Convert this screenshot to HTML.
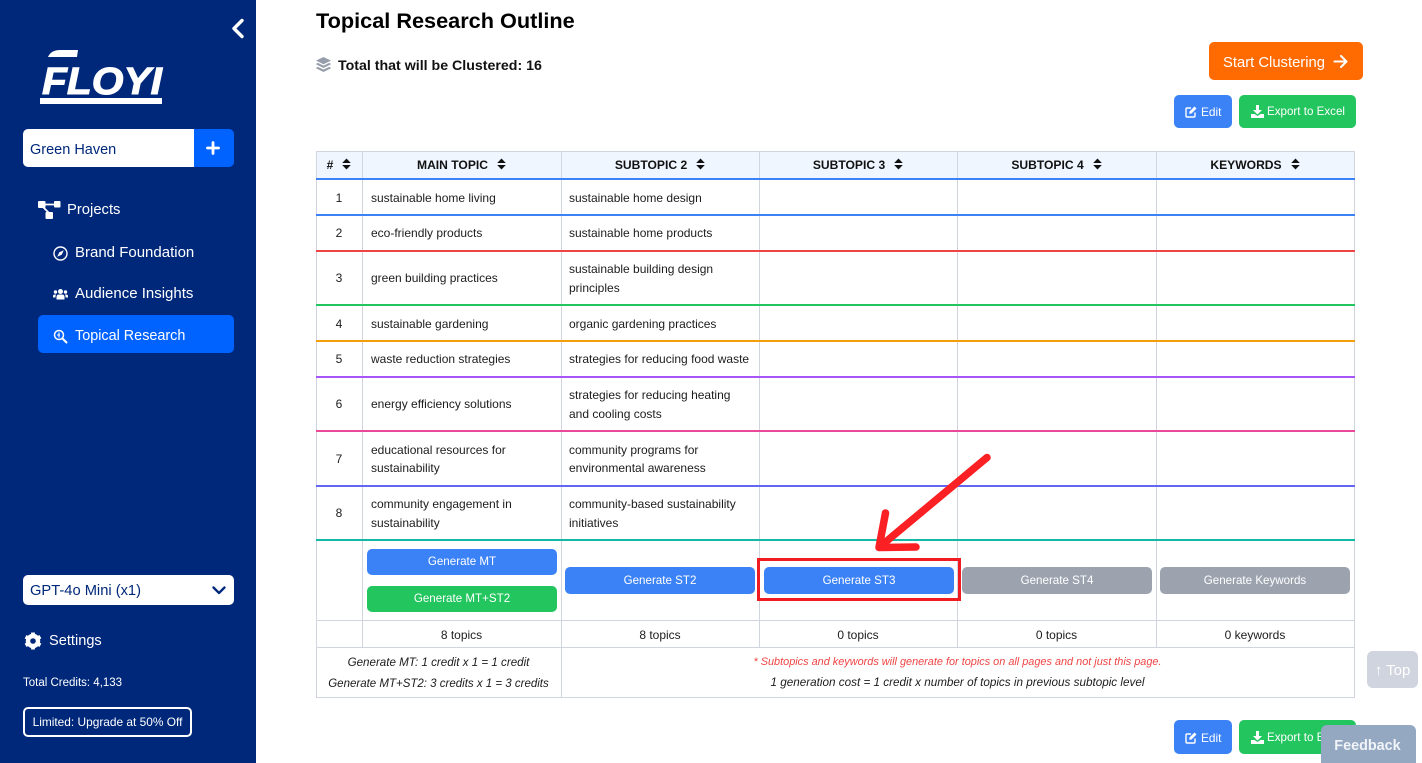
<!DOCTYPE html>
<html><head><meta charset="utf-8">
<style>
html,body{margin:0;padding:0;width:1422px;height:763px;overflow:hidden;background:#fff;font-family:"Liberation Sans",sans-serif;color:#111}
.a,.t,.c,.b,.l,.v{position:absolute}
.t{white-space:nowrap}
.c{white-space:nowrap;text-align:center}
.td{font-size:12px;color:#1c1c1c;white-space:nowrap;position:absolute}
.n{font-size:12px;color:#1c1c1c;position:absolute;left:316px;width:46px;text-align:center}
.h{position:absolute;top:152px;height:27px;line-height:27px;font-size:12.1px;font-weight:bold;color:#111;text-align:center;white-space:nowrap}
.l{left:316px;width:1039px;height:2px}
.g{left:316px;width:1039px;height:1px;background:#d1d5e0;position:absolute}
.v{width:1px;background:#d1d5e0}
.b{border-radius:5px;color:#fff;text-align:center;font-size:11.6px;white-space:nowrap;line-height:26px;height:26px}
.side{font-size:14.8px;color:#fff}
.sort{display:inline-block;margin-left:9px;vertical-align:-1px}
</style></head><body>
<!-- sidebar -->
<div class="a" style="left:0;top:0;width:256px;height:763px;background:#00287a"></div>
<svg class="a" style="left:230px;top:18px" width="15" height="21" viewBox="0 0 15 21"><path d="M12 2.500 4 10.500 12 18.500" fill="none" stroke="#fff" stroke-width="3.400" stroke-linecap="round" stroke-linejoin="round"/></svg>
<svg class="a" style="left:36px;top:44px" width="132" height="64" viewBox="0 0 132 64">
<path d="M12 13 Q15 6 24 6 L42 6 L41 13 Z" fill="#fff"/>
<text x="6" y="50" font-family="Liberation Sans" font-weight="bold" font-style="italic" font-size="38" fill="#fff" stroke="#fff" stroke-width="1" textLength="120" lengthAdjust="spacingAndGlyphs">FLOYI</text>
<rect x="4" y="54" width="122" height="6" fill="#fff"/></svg>
<div class="a" style="left:23px;top:129px;width:171px;height:38px;background:#fff;border-radius:5px 0 0 5px"></div>
<div class="t" style="left:30px;top:142px;font-size:14.500px;color:#00287a">Green Haven</div>
<div class="a" style="left:194px;top:129px;width:40px;height:38px;background:#0062ff;border-radius:0 5px 5px 0"></div>
<svg class="a" style="left:206px;top:141px" width="14" height="14"><path d="M7 1.500v11M1.500 7h11" stroke="#fff" stroke-width="2.800" stroke-linecap="round"/></svg>

<svg class="a" style="left:38px;top:200px" width="23" height="20" viewBox="0 0 23 20"><path d="M7 4.500h9M5 7l6 6" stroke="#fff" stroke-width="1.800" fill="none"/><rect x="0" y="1" width="7.500" height="7" rx="1" fill="#fff"/><rect x="16" y="1" width="6.500" height="6.500" rx="1" fill="#fff"/><rect x="7.500" y="12" width="7.500" height="7" rx="1" fill="#fff"/></svg>
<div class="t side" style="left:67px;top:202px">Projects</div>
<svg class="a" style="left:53px;top:246px" width="15" height="15" viewBox="0 0 15 15"><circle cx="7.500" cy="7.500" r="6.500" fill="none" stroke="#fff" stroke-width="1.400"/><path d="M10.800 4.200 8.700 8.700 4.200 10.800 6.300 6.300Z" fill="#fff"/></svg>
<div class="t side" style="left:75px;top:244px;font-size:15px">Brand Foundation</div>
<svg class="a" style="left:53px;top:288px" width="15" height="12" viewBox="0 0 15 12"><circle cx="7.500" cy="3.500" r="2.500" fill="#fff"/><circle cx="2.500" cy="4" r="1.700" fill="#fff"/><circle cx="12.500" cy="4" r="1.700" fill="#fff"/><path d="M3.500 11.500V9Q3.500 6.500 6 6.500H9Q11.500 6.500 11.500 9V11.500Z" fill="#fff"/><path d="M0 9.500V8Q0 6.500 2 6.500H3Q2.500 7.500 2.500 9.500ZM15 9.500V8Q15 6.500 13 6.500H12Q12.500 7.500 12.500 9.500Z" fill="#fff"/></svg>
<div class="t side" style="left:75px;top:285px;font-size:15px">Audience Insights</div>
<div class="a" style="left:38px;top:315px;width:196px;height:38px;background:#0062ff;border-radius:5px"></div>
<svg class="a" style="left:53px;top:329px" width="15" height="15" viewBox="0 0 15 15"><circle cx="6" cy="6" r="4.500" fill="none" stroke="#fff" stroke-width="1.500"/><path d="M9.500 9.500 13.500 13.500" stroke="#fff" stroke-width="2" stroke-linecap="round"/><path d="M6 3.500V8.500M4 6h3" stroke="#fff" stroke-width="1.100"/></svg>
<div class="t side" style="left:75px;top:328px;font-size:14.400px">Topical Research</div>

<div class="a" style="left:23px;top:575px;width:211px;height:30px;background:#fff;border-radius:5px"></div>
<div class="t" style="left:30px;top:583px;font-size:14.700px;color:#00287a">GPT-4o Mini (x1)</div>
<svg class="a" style="left:212px;top:586px" width="14" height="9"><path d="M1.500 1.500 7 7 12.500 1.500" fill="none" stroke="#00287a" stroke-width="2.300" stroke-linecap="round" stroke-linejoin="round"/></svg>
<svg class="a" style="left:24px;top:632px" width="18" height="18" viewBox="0 0 18 18"><circle cx="9" cy="9" r="5" fill="none" stroke="#fff" stroke-width="4.400"/><path d="M9 0.500V4M9 14V17.500M1.600 4.700 4.700 6.500M13.300 11.500 16.400 13.300M1.600 13.300 4.700 11.500M13.300 6.500 16.400 4.700" stroke="#fff" stroke-width="3.800"/></svg>
<div class="t side" style="left:49px;top:633px;font-size:14.600px">Settings</div>
<div class="t" style="left:23px;top:677px;font-size:11.500px;color:#fff">Total Credits: 4,133</div>
<div class="a" style="left:23px;top:707px;width:165px;border:2px solid #fff;border-radius:5px;box-sizing:content-box;height:26px"></div>
<div class="c" style="left:23px;top:715px;width:169px;font-size:11.900px;color:#fff">Limited: Upgrade at 50% Off</div>

<!-- header -->
<div class="t" style="left:316px;top:8px;font-size:21.700px;font-weight:bold;color:#000">Topical Research Outline</div>
<svg class="a" style="left:316px;top:57px" width="15" height="16" viewBox="0 0 15 16"><path d="M7.500 0 15 3.600 7.500 7.200 0 3.600Z" fill="#979eab"/><path d="M1.500 5.800 7.500 8.600 13.500 5.800 15 7.300 7.500 11 0 7.300Z" fill="#979eab"/><path d="M1.500 9.700 7.500 12.500 13.500 9.700 15 11.200 7.500 15 0 11.200Z" fill="#979eab"/></svg>
<div class="t" style="left:338px;top:58px;font-size:14.200px;font-weight:bold;color:#111">Total that will be Clustered: 16</div>

<div class="a" style="left:1209px;top:42px;width:154px;height:38px;background:#ff6b00;border-radius:5px"></div>
<div class="t" style="left:1223px;top:55px;font-size:14.800px;color:#fff">Start Clustering</div>
<svg class="a" style="left:1333px;top:54px" width="15" height="15" viewBox="0 0 15 15"><path d="M1.500 7.500H13M8 2 13.500 7.500 8 13" fill="none" stroke="#fff" stroke-width="2.100" stroke-linecap="round" stroke-linejoin="round"/></svg>

<div class="a" style="left:1174px;top:95px;width:58px;height:33px;background:#3b82f6;border-radius:5px"></div>
<svg class="a" style="left:1185px;top:105px" width="13" height="13" viewBox="0 0 13 13"><path d="M10 7.500V11Q10 12 9 12H2Q1 12 1 11V4Q1 3 2 3H6" fill="none" stroke="#fff" stroke-width="1.400"/><path d="M4.500 6.500 9.500 1.500 11.500 3.500 6.500 8.500 4.200 8.800Z" fill="#fff"/></svg>
<div class="t" style="left:1201px;top:105px;font-size:11.900px;color:#fff">Edit</div>
<div class="a" style="left:1239px;top:95px;width:117px;height:33px;background:#22c55e;border-radius:5px"></div>
<svg class="a" style="left:1251px;top:105px" width="13" height="13" viewBox="0 0 13 13"><path d="M5 0h3v5h3L6.500 9.500 2 5h3Z" fill="#fff"/><path d="M0 9h3.500l3 2 3-2H13v4H0Z" fill="#fff"/></svg>
<div class="t" style="left:1267px;top:105px;font-size:11.600px;color:#fff">Export to Excel</div>

<!-- table -->
<div class="a" style="left:316px;top:151px;width:1039px;height:28px;background:#eff6ff"></div>
<div class="g" style="top:151px"></div>
<div class="v" style="left:316px;top:151px;height:547px"></div>
<div class="v" style="left:362px;top:151px;height:497px"></div>
<div class="v" style="left:561px;top:151px;height:547px"></div>
<div class="v" style="left:759px;top:151px;height:497px"></div>
<div class="v" style="left:957px;top:151px;height:497px"></div>
<div class="v" style="left:1156px;top:151px;height:497px"></div>
<div class="v" style="left:1354px;top:151px;height:547px"></div>

<div class="h" style="left:316px;width:46px">#<svg class="sort" width="9" height="12" viewBox="0 0 9 12"><path d="M4.500 0.500 8.800 5H0.200ZM4.500 11.500 0.200 7H8.800Z" fill="#111"/></svg></div>
<div class="h" style="left:362px;width:199px">MAIN TOPIC<svg class="sort" width="9" height="12" viewBox="0 0 9 12"><path d="M4.500 0.500 8.800 5H0.200ZM4.500 11.500 0.200 7H8.800Z" fill="#111"/></svg></div>
<div class="h" style="left:561px;width:198px">SUBTOPIC 2<svg class="sort" width="9" height="12" viewBox="0 0 9 12"><path d="M4.500 0.500 8.800 5H0.200ZM4.500 11.500 0.200 7H8.800Z" fill="#111"/></svg></div>
<div class="h" style="left:759px;width:198px">SUBTOPIC 3<svg class="sort" width="9" height="12" viewBox="0 0 9 12"><path d="M4.500 0.500 8.800 5H0.200ZM4.500 11.500 0.200 7H8.800Z" fill="#111"/></svg></div>
<div class="h" style="left:957px;width:199px">SUBTOPIC 4<svg class="sort" width="9" height="12" viewBox="0 0 9 12"><path d="M4.500 0.500 8.800 5H0.200ZM4.500 11.500 0.200 7H8.800Z" fill="#111"/></svg></div>
<div class="h" style="left:1156px;width:198px">KEYWORDS<svg class="sort" width="9" height="12" viewBox="0 0 9 12"><path d="M4.500 0.500 8.800 5H0.200ZM4.500 11.500 0.200 7H8.800Z" fill="#111"/></svg></div>

<div class="l" style="top:178px;background:#3b82f6"></div>
<div class="l" style="top:214px;background:#3b82f6"></div>
<div class="l" style="top:250px;background:#ef4444"></div>
<div class="l" style="top:304px;background:#22c55e"></div>
<div class="l" style="top:340px;background:#f59e0b"></div>
<div class="l" style="top:376px;background:#a855f7"></div>
<div class="l" style="top:430px;background:#ec4899"></div>
<div class="l" style="top:485px;background:#6366f1"></div>
<div class="l" style="top:539px;background:#14b8a6"></div>
<div class="g" style="top:620px"></div>
<div class="g" style="top:647px"></div>
<div class="g" style="top:697px"></div>

<div class="n" style="top:191px">1</div><div class="td" style="left:371px;top:191px">sustainable home living</div><div class="td" style="left:569px;top:191px">sustainable home design</div>
<div class="n" style="top:226px">2</div><div class="td" style="left:371px;top:226px">eco-friendly products</div><div class="td" style="left:569px;top:226px">sustainable home products</div>
<div class="n" style="top:271px">3</div><div class="td" style="left:371px;top:271px">green building practices</div><div class="td" style="left:569px;top:262px">sustainable building design</div><div class="td" style="left:569px;top:281px">principles</div>
<div class="n" style="top:317px">4</div><div class="td" style="left:371px;top:317px">sustainable gardening</div><div class="td" style="left:569px;top:317px">organic gardening practices</div>
<div class="n" style="top:352px">5</div><div class="td" style="left:371px;top:352px">waste reduction strategies</div><div class="td" style="left:569px;top:352px">strategies for reducing food waste</div>
<div class="n" style="top:397px">6</div><div class="td" style="left:371px;top:397px">energy efficiency solutions</div><div class="td" style="left:569px;top:388px">strategies for reducing heating</div><div class="td" style="left:569px;top:407px">and cooling costs</div>
<div class="n" style="top:452px">7</div><div class="td" style="left:371px;top:443px">educational resources for</div><div class="td" style="left:371px;top:461px">sustainability</div><div class="td" style="left:569px;top:443px">community programs for</div><div class="td" style="left:569px;top:461px">environmental awareness</div>
<div class="n" style="top:506px">8</div><div class="td" style="left:371px;top:497px">community engagement in</div><div class="td" style="left:371px;top:516px">sustainability</div><div class="td" style="left:569px;top:497px">community-based sustainability</div><div class="td" style="left:569px;top:516px">initiatives</div>

<div class="b" style="left:367px;top:549px;width:190px;background:#3b82f6">Generate MT</div>
<div class="b" style="left:367px;top:586px;width:190px;background:#22c55e">Generate MT+ST2</div>
<div class="b" style="left:565px;top:567px;width:190px;height:27px;line-height:28px;background:#3b82f6">Generate ST2</div>
<div class="b" style="left:764px;top:567px;width:190px;height:27px;line-height:28px;background:#3b82f6">Generate ST3</div>
<div class="b" style="left:962px;top:567px;width:190px;height:27px;line-height:28px;background:#9ca3af">Generate ST4</div>
<div class="b" style="left:1160px;top:567px;width:190px;height:27px;line-height:28px;background:#9ca3af">Generate Keywords</div>

<div class="c td" style="left:362px;width:199px;top:628px">8 topics</div>
<div class="c td" style="left:561px;width:198px;top:628px">8 topics</div>
<div class="c td" style="left:759px;width:198px;top:628px">0 topics</div>
<div class="c td" style="left:957px;width:199px;top:628px">0 topics</div>
<div class="c td" style="left:1156px;width:198px;top:628px">0 keywords</div>

<div class="c" style="left:316px;width:245px;top:656px;font-size:11.600px;font-style:italic;color:#1c1c1c">Generate MT: 1 credit x 1 = 1 credit</div>
<div class="c" style="left:316px;width:245px;top:678px;font-size:11.500px;font-style:italic;color:#1c1c1c">Generate MT+ST2: 3 credits x 1 = 3 credits</div>
<div class="c" style="left:561px;width:793px;top:656px;font-size:10.900px;font-style:italic;color:#ef4444">* Subtopics and keywords will generate for topics on all pages and not just this page.</div>
<div class="c" style="left:561px;width:793px;top:676px;font-size:11.700px;font-style:italic;color:#1c1c1c">1 generation cost = 1 credit x number of topics in previous subtopic level</div>

<!-- annotation -->
<div class="a" style="left:757px;top:558px;width:204px;height:43px;border:3px solid #f01c22;box-sizing:border-box"></div>
<svg class="a" style="left:870px;top:450px" width="125" height="105" viewBox="0 0 125 105"><path d="M117 7.500 9 97.500M15.500 63 9 97.500 46 97" fill="none" stroke="#fb2024" stroke-width="7.500" stroke-linecap="round" stroke-linejoin="round"/></svg>

<!-- bottom -->
<div class="a" style="left:1174px;top:720px;width:58px;height:34px;background:#3b82f6;border-radius:5px"></div>
<svg class="a" style="left:1185px;top:731px" width="13" height="13" viewBox="0 0 13 13"><path d="M10 7.500V11Q10 12 9 12H2Q1 12 1 11V4Q1 3 2 3H6" fill="none" stroke="#fff" stroke-width="1.400"/><path d="M4.500 6.500 9.500 1.500 11.500 3.500 6.500 8.500 4.200 8.800Z" fill="#fff"/></svg>
<div class="t" style="left:1201px;top:731px;font-size:11.900px;color:#fff">Edit</div>
<div class="a" style="left:1239px;top:720px;width:117px;height:34px;background:#22c55e;border-radius:5px"></div>
<svg class="a" style="left:1251px;top:731px" width="13" height="13" viewBox="0 0 13 13"><path d="M5 0h3v5h3L6.500 9.500 2 5h3Z" fill="#fff"/><path d="M0 9h3.500l3 2 3-2H13v4H0Z" fill="#fff"/></svg>
<div class="t" style="left:1267px;top:731px;font-size:11.600px;color:#fff">Export to Excel</div>

<div class="a" style="left:1367px;top:651px;width:51px;height:37px;background:#d0d4df;border-radius:6px"></div>
<div class="c" style="left:1367px;top:662px;width:51px;font-size:15px;color:#fff">↑ Top</div>
<div class="a" style="left:1321px;top:725px;width:95px;height:38px;background:#94a8c1;border-radius:6px 6px 0 0"></div>
<div class="c" style="left:1320px;top:738px;width:95px;font-size:14.400px;font-weight:bold;color:#f1f4f8">Feedback</div>
</body></html>
